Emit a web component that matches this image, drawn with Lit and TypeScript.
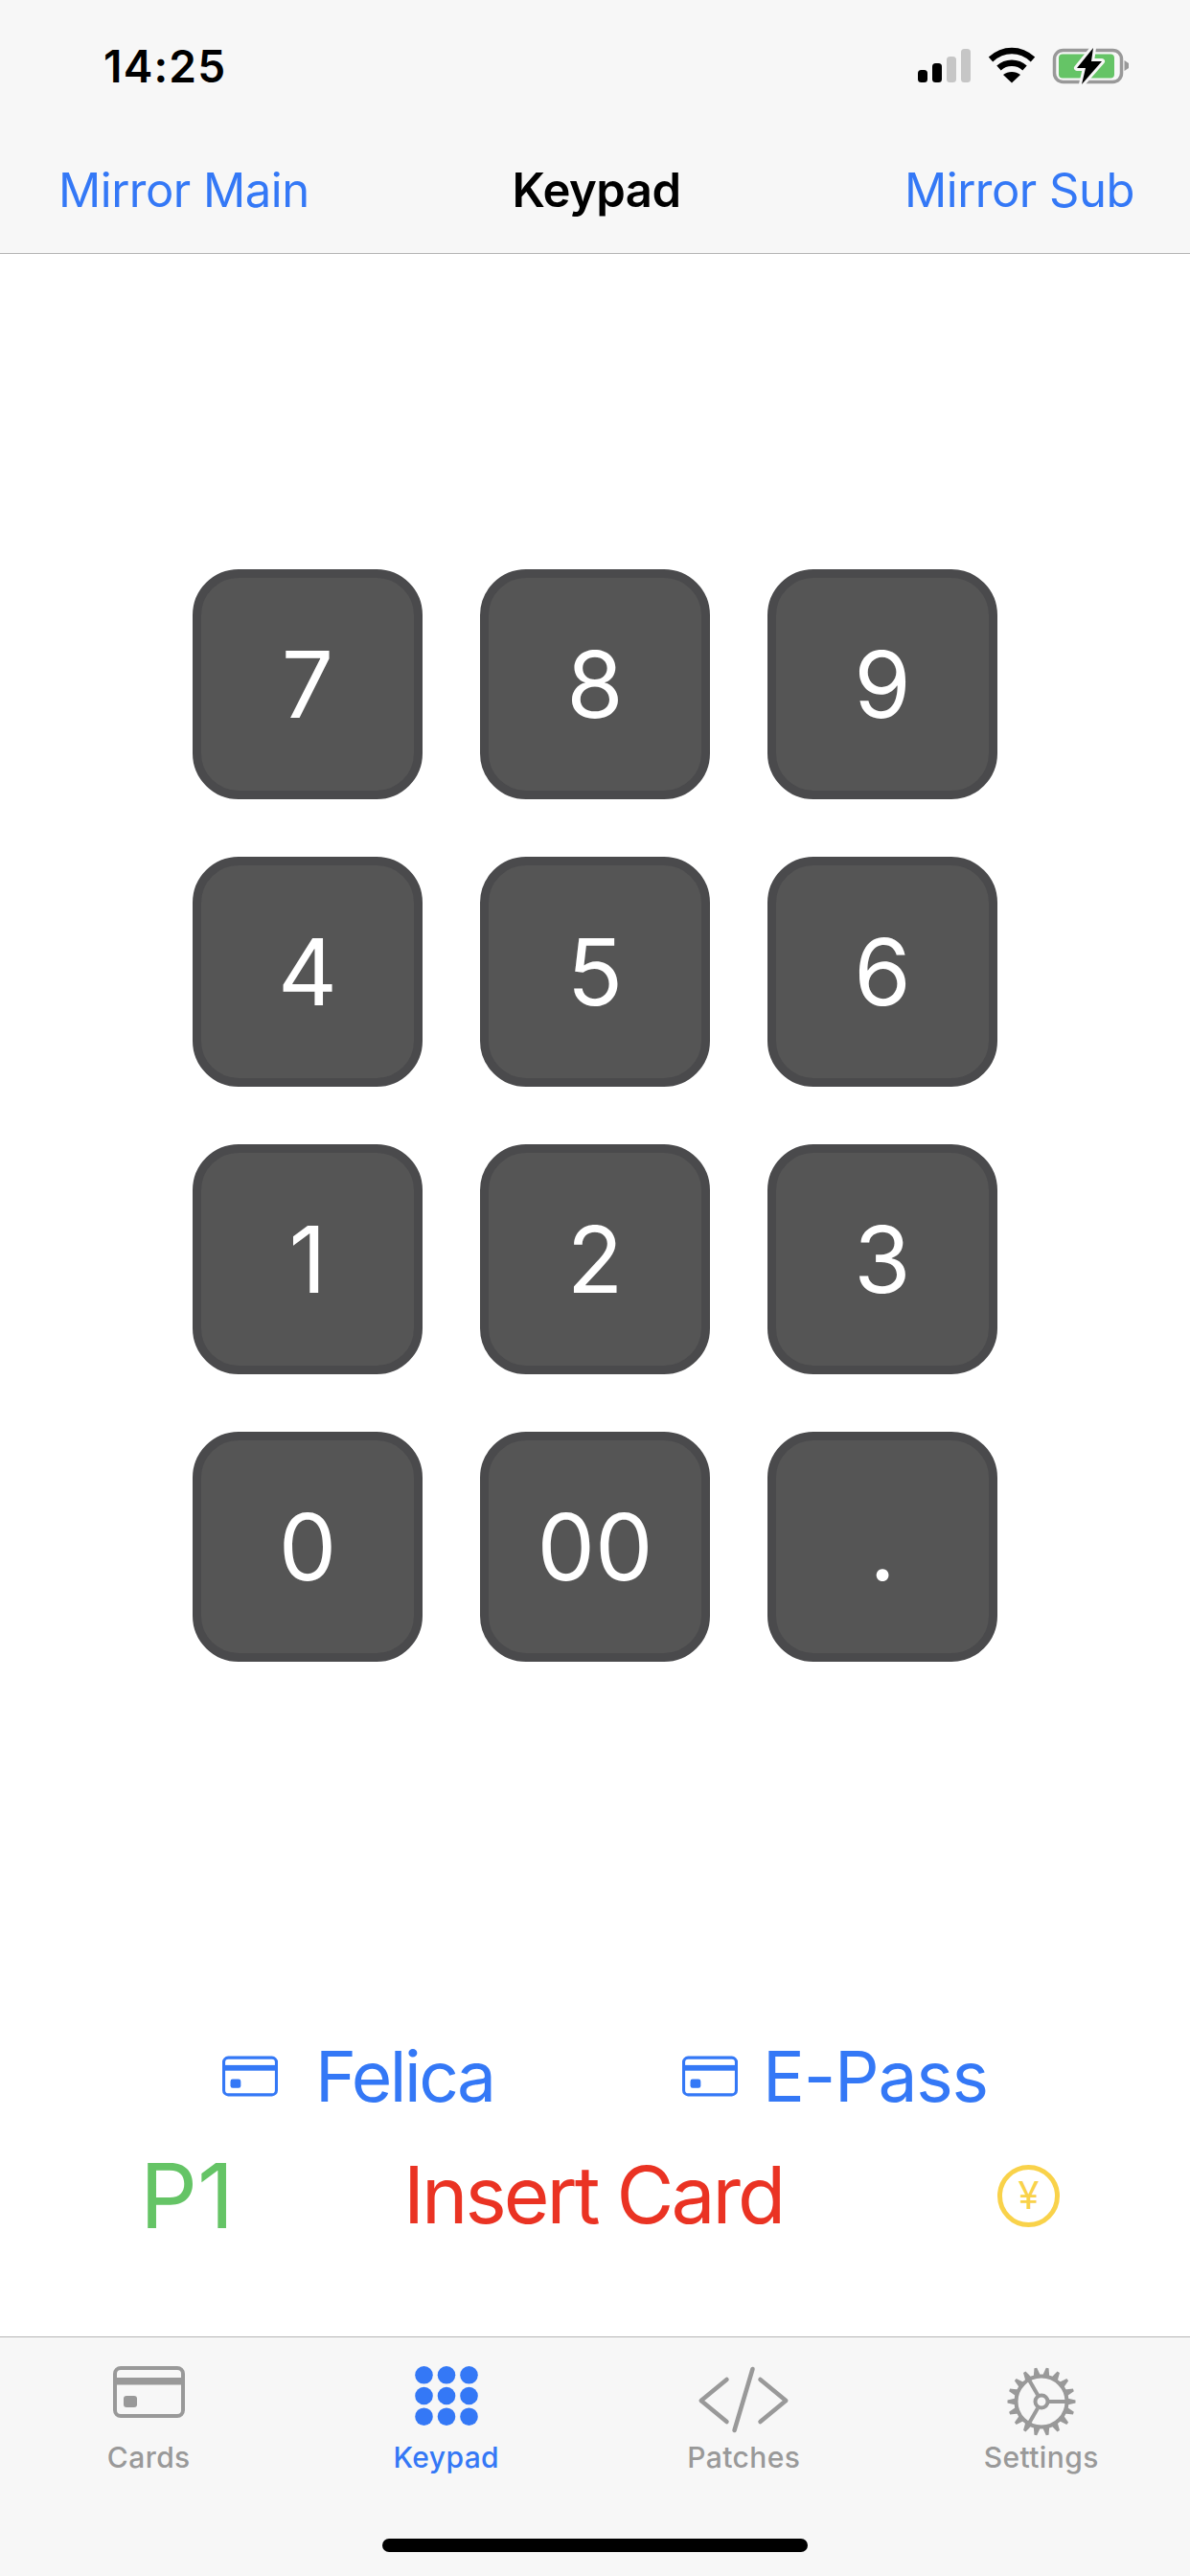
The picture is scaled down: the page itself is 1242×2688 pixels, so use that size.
import { LitElement, css, html, svg } from "lit";
import { customElement } from "lit/decorators.js";

const KEYS = ["7", "8", "9", "4", "5", "6", "1", "2", "3", "0", "00", "."];

// 18 gear teeth, one every 20 degrees, starting on the right spoke
const gearTeeth = Array.from({ length: 18 }, (_, i) => i * 20);

const cardIcon = (w: number, h: number) => html`
  <svg width=${w} height=${h} viewBox="0 0 75 54" fill="none">
    <rect x="2" y="2" width="71" height="50" rx="6" stroke="currentColor" stroke-width="4" />
    <rect x="2" y="12" width="71" height="7.5" fill="currentColor" />
    <rect x="11" y="31" width="14" height="12" rx="3" fill="currentColor" />
  </svg>
`;

const keypadIcon = html`
  <svg width="66" height="62" viewBox="0 0 66 62" fill="currentColor">
    ${[9.5, 33, 56.5].flatMap((cx) =>
      [9.3, 31, 52.7].map((cy) => svg`<circle cx=${cx} cy=${cy} r="9.3" />`)
    )}
  </svg>
`;

const patchesIcon = html`
  <svg width="100" height="72" viewBox="0 0 100 72" fill="none" stroke="currentColor" stroke-width="4.5" stroke-linecap="round" stroke-linejoin="round">
    <path d="M32.500 14 L5.750 36 L32.500 58" />
    <path d="M67.500 14 L94.250 36 L67.500 58" />
    <path d="M59.500 3 L40.500 67" />
  </svg>
`;

const settingsIcon = html`
  <svg width="74" height="74" viewBox="-37 -37 74 74" fill="none" stroke="currentColor">
    <circle r="26.500" stroke-width="4" />
    <circle r="6.500" stroke-width="4" />
    ${gearTeeth.map(
      (a) => svg`<path d="M27 -3.600 L35.500 -1.400 L35.500 1.400 L27 3.600 Z" transform="rotate(${a})" fill="currentColor" stroke="none" />`
    )}
    ${[0, 120, 240].map(
      (a) => svg`<path d="M8 0 H27" transform="rotate(${a})" stroke-width="4" />`
    )}
  </svg>
`;

const TABS = [
  { label: "Cards", icon: cardIcon(75, 54), active: false },
  { label: "Keypad", icon: keypadIcon, active: true },
  { label: "Patches", icon: patchesIcon, active: false },
  { label: "Settings", icon: settingsIcon, active: false },
];

@customElement("app-root")
export class AppRoot extends LitElement {
  static styles = css`
    :host {
      display: flex;
      flex-direction: column;
      width: 1242px;
      height: 2688px;
      background: #fff;
      font-family: Inter, "Liberation Sans", sans-serif;
      line-height: 1;
      overflow: hidden;
    }

    .top {
      height: 265px;
      box-sizing: border-box;
      background: #f7f7f7;
      border-bottom: 1px solid #b4b4b4;
      display: flex;
      flex-direction: column;
    }

    .status {
      height: 137px;
      display: flex;
      align-items: center;
      justify-content: space-between;
      padding: 0 63px 0 108px;
    }

    .time {
      font-size: 46px;
      font-weight: 600;
      color: #000;
      letter-spacing: 1.2px;
    }

    .nav {
      flex: 1;
      display: grid;
      grid-template-columns: 1fr auto 1fr;
      align-items: center;
      padding: 0 58px 5px 61px;
      font-size: 49px;
      letter-spacing: -0.5px;
      color: #3478f6;
    }

    .nav .title {
      color: #000;
      font-weight: 600;
    }

    .nav .right {
      text-align: right;
    }

    main {
      flex: 1;
      display: flex;
      flex-direction: column;
      align-items: center;
    }

    .keys {
      margin-top: 329px;
      display: grid;
      grid-template-columns: repeat(3, 240px);
      grid-auto-rows: 240px;
      gap: 60px;
    }

    .key {
      box-sizing: border-box;
      border: 9px solid #4a4a4c;
      border-radius: 48px;
      background: #555555;
      color: #fff;
      font-size: 96px;
      font-weight: 370;
      display: flex;
      align-items: center;
      justify-content: center;
    }

    .readers {
      align-self: stretch;
      margin-top: 390px;
      padding-left: 232px;
      display: grid;
      grid-template-columns: 480px auto;
      justify-content: start;
      height: 84px;
      align-items: center;
      color: #3478f6;
      font-size: 73px;
    }

    .reader {
      display: flex;
      align-items: center;
      gap: 39px;
      letter-spacing: -2.5px;
    }

    .reader.tight {
      gap: 26px;
      letter-spacing: -1.2px;
    }

    .state {
      align-self: stretch;
      margin-top: 36px;
      padding: 0 136px 0 146px;
      display: grid;
      grid-template-columns: 275px 1fr auto;
      align-items: center;
      height: 90px;
    }

    .player {
      font-size: 94px;
      color: #65c466;
    }

    .prompt {
      font-size: 82px;
      letter-spacing: -3px;
      color: #ea3323;
    }

    .coin {
      box-sizing: border-box;
      width: 65px;
      height: 65px;
      border: 5px solid #f9d24a;
      border-radius: 50%;
      color: #f9d24a;
      font-size: 40px;
      display: flex;
      align-items: center;
      justify-content: center;
    }

    .tabs {
      height: 250px;
      box-sizing: border-box;
      background: #f7f7f7;
      border-top: 1px solid #b4b4b4;
      display: grid;
      grid-template-columns: repeat(4, 1fr);
      position: relative;
    }

    .tab {
      display: flex;
      flex-direction: column;
      align-items: center;
      padding-top: 30px;
      color: #999999;
      font-size: 30px;
      font-weight: 500;
    }

    .tab.active {
      color: #3478f6;
    }

    .tab .icon {
      height: 74px;
      display: flex;
      align-items: flex-start;
      justify-content: center;
    }

    .tab .label {
      margin-top: 6px;
      letter-spacing: 0.4px;
    }

    .home {
      position: absolute;
      left: 399px;
      bottom: 25px;
      width: 444px;
      height: 14px;
      border-radius: 7px;
      background: #000;
    }
  `;

  private renderStatusIcons() {
    return html`
      <svg width="222" height="40" viewBox="957 48 222 40">
        <rect x="958" y="72" width="10" height="13" rx="3.500" fill="#000" />
        <rect x="973" y="65" width="10" height="20" rx="3.500" fill="#000" />
        <rect x="988" y="58" width="10" height="27" rx="3.500" fill="#c6c6c6" />
        <rect x="1003" y="50" width="10" height="35" rx="3.500" fill="#c6c6c6" />
        <g fill="none" stroke="#000" stroke-width="6.500">
          <path d="M1034 61 C1047 49 1065 49 1078 61" />
          <path d="M1042.500 70 C1050 63 1062 63 1069.500 70" />
        </g>
        <path d="M1056 85.500 L1047 77 C1052 73 1060 73 1065 77 Z" fill="#000" />
        <rect x="1100.500" y="51.500" width="70" height="33" rx="9" fill="none" stroke="#999" stroke-width="3.500" />
        <rect x="1105" y="55.500" width="58" height="25" rx="4" fill="#65c466" />
        <path d="M1173.500 62 L1178 65 V70 L1173.500 73 Z" fill="#999" />
        <path d="M1141 49 L1124 70 H1133 L1129 87 L1150 63 H1139 Z" fill="#000" stroke="#f7f7f7" stroke-width="6" stroke-linejoin="round" paint-order="stroke" />
      </svg>
    `;
  }

  render() {
    return html`
      <header class="top">
        <div class="status">
          <span class="time">14:25</span>
          ${this.renderStatusIcons()}
        </div>
        <nav class="nav">
          <span>Mirror Main</span>
          <span class="title">Keypad</span>
          <span class="right">Mirror Sub</span>
        </nav>
      </header>
      <main>
        <div class="keys">
          ${KEYS.map((k) => html`<div class="key">${k}</div>`)}
        </div>
        <div class="readers">
          <div class="reader">${cardIcon(58, 43)}<span>Felica</span></div>
          <div class="reader tight">${cardIcon(58, 43)}<span>E-Pass</span></div>
        </div>
        <div class="state">
          <span class="player">P1</span>
          <span class="prompt">Insert Card</span>
          <span class="coin">¥</span>
        </div>
      </main>
      <footer class="tabs">
        ${TABS.map(
          (t) => html`
            <div class="tab ${t.active ? "active" : ""}">
              <div class="icon">${t.icon}</div>
              <span class="label">${t.label}</span>
            </div>
          `
        )}
        <div class="home"></div>
      </footer>
    `;
  }
}
